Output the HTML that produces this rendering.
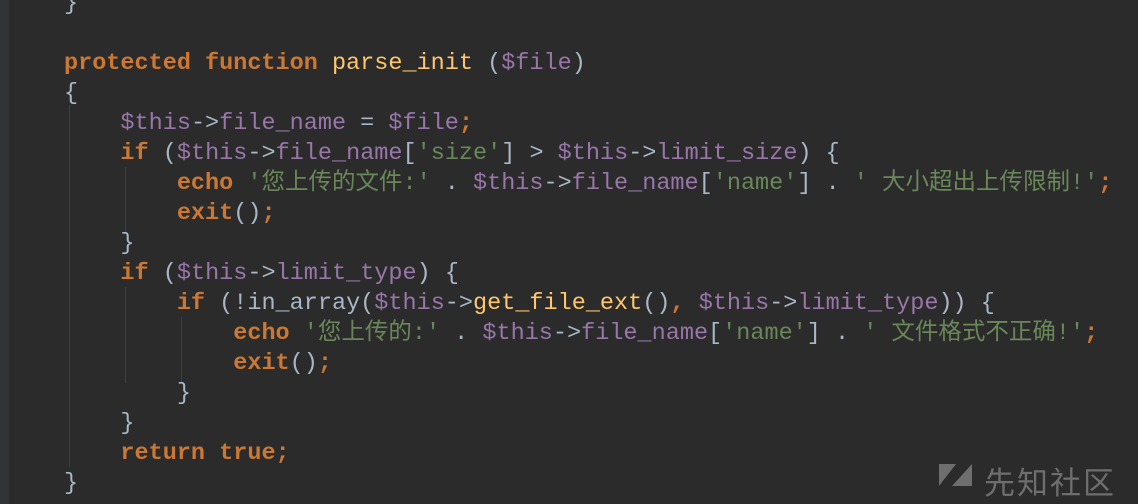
<!DOCTYPE html>
<html><head><meta charset="utf-8"><style>
html,body{margin:0;padding:0;width:1138px;height:504px;overflow:hidden;background:#2b2b2b}
.g{position:absolute;left:0;top:0;width:9px;height:504px;background:#313335}
pre{position:absolute;left:64px;top:-11px;margin:0;font-family:"Liberation Mono","Noto Sans CJK SC",monospace;font-weight:normal;font-size:23.5px;line-height:30px;color:#a9b7c6}
.k{color:#cc7832;font-weight:bold}.v{color:#9876aa}.s{color:#6a8759}.f{color:#ffc66d}
.ig{position:absolute;width:1px;background:#404040}
.wm{position:absolute;left:984px;top:458px;font-family:"Noto Sans CJK SC",sans-serif;font-size:31px;color:#6e6e6e;letter-spacing:2px}
</style></head><body>
<div class="g"></div>
<div class="ig" style="left:69px;top:105px;height:362px"></div>
<div class="ig" style="left:125px;top:167px;height:66px"></div>
<div class="ig" style="left:125px;top:287px;height:96px"></div>
<div class="ig" style="left:181px;top:317px;height:66px"></div>
<pre>}

<span class="k">protected function</span> <span class="f">parse_init</span> (<span class="v">$file</span>)
{
    <span class="v">$this</span>-&gt;<span class="v">file_name</span> = <span class="v">$file</span><span class="k">;</span>
    <span class="k">if</span> (<span class="v">$this</span>-&gt;<span class="v">file_name</span>[<span class="s">'size'</span>] &gt; <span class="v">$this</span>-&gt;<span class="v">limit_size</span>) {
        <span class="k">echo</span> <span class="s">'您上传的文件:'</span> . <span class="v">$this</span>-&gt;<span class="v">file_name</span>[<span class="s">'name'</span>] . <span class="s">' 大小超出上传限制!'</span><span class="k">;</span>
        <span class="k">exit</span>()<span class="k">;</span>
    }
    <span class="k">if</span> (<span class="v">$this</span>-&gt;<span class="v">limit_type</span>) {
        <span class="k">if</span> (!in_array(<span class="v">$this</span>-&gt;<span class="f">get_file_ext</span>()<span class="k">,</span> <span class="v">$this</span>-&gt;<span class="v">limit_type</span>)) {
            <span class="k">echo</span> <span class="s">'您上传的:'</span> . <span class="v">$this</span>-&gt;<span class="v">file_name</span>[<span class="s">'name'</span>] . <span class="s">' 文件格式不正确!'</span><span class="k">;</span>
            <span class="k">exit</span>()<span class="k">;</span>
        }
    }
    <span class="k">return true;</span>
}</pre>
<svg style="position:absolute;left:938px;top:462px" width="36" height="26"><polygon points="1,2 18,2 1,24" fill="#6e6e6e"/><polygon points="34,2 34,24 14,24" fill="#6e6e6e"/></svg>
<div class="wm">先知社区</div>
</body></html>
